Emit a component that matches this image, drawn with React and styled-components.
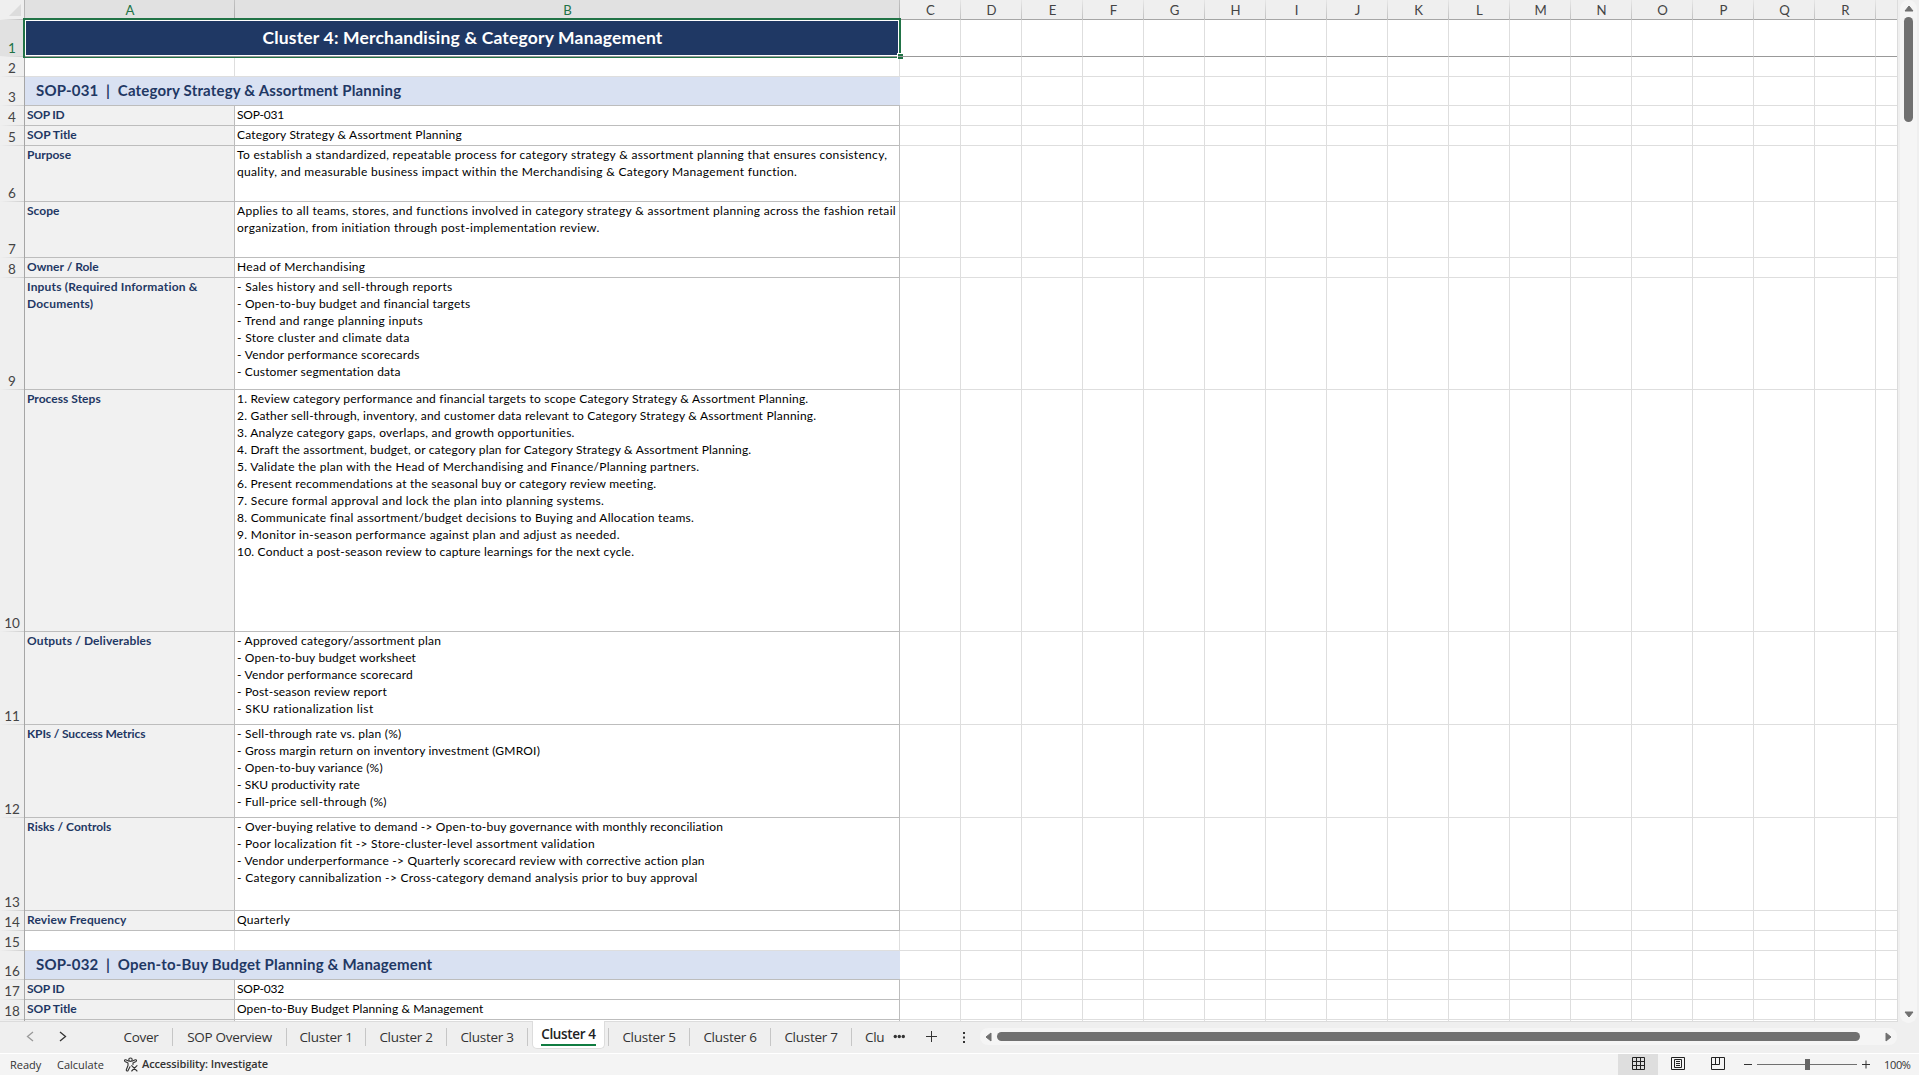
import React from 'react';
import styled, {createGlobalStyle} from "styled-components";

const GlobalStyle = createGlobalStyle`
  * { box-sizing: border-box; }
  body {
    margin: 0;
    overflow: hidden;
    background: #efefef;
  }
  svg {
    display: block;
    flex: none;
  }
`
const Window = styled.div`
  width: 1919px;
  height: 1075px;
  display: flex;
  flex-direction: column;
  background: #efefef;
  color: #000;
  font-family: Lato, "Liberation Sans", sans-serif;
`
const Workspace = styled.div`
  display: flex;
  height: 1022px;
`
const Sheet = styled.div`
  width: 1898px;
  height: 1022px;
  overflow: hidden;
  display: flex;
  flex-direction: column;
  border-right: 1px solid #dcdcdc;
  border-bottom: 1px solid #dcdcdc;
  background: #fff;
`
const HeaderRow = styled.div`
  flex: none;
  display: flex;
  height: 20px;
  background: #efefef;
`
const Corner = styled.div`
  flex: none;
  width: 25px;
  display: flex;
  justify-content: flex-end;
  padding: 4px 3px 0 0;
  border-right: 1px solid #b5b5b5;
  background: linear-gradient(90deg, #efefef, #bdbdbd) left bottom / 100% 1px no-repeat;
`
const ColumnHead = styled.div`
  flex: none;
  width: ${props=>props.$width}px;
  height: 20px;
  padding: 2px 0 0 1px;
  line-height: 17px;
  font-size: 13.2px;
  text-align: center;
  color: ${props=>props.$selected ? '#217346' : '#444'};
  background: ${props=>props.$selected ? '#e1e1e1' : '#efefef'};
  border-right: 1px solid;
  border-image: linear-gradient(${props=>props.$selected ? '#c4c4c4, #a8a8a8' : '#e9e9e9, #bdbdbd'}) 1;
  border-image-width: 0 1px 0 0;
  box-shadow: inset 0 -1px 0 #a6a6a6;
`
const Row = styled.div`
  flex: none;
  display: flex;
  height: ${props=>props.$height}px;
`
const RowHead = styled.div`
  flex: none;
  width: 25px;
  display: flex;
  align-items: flex-end;
  justify-content: center;
  line-height: 18px;
  font-size: 13.5px;
  color: ${props=>props.$selected ? '#217346' : '#444'};
  background: linear-gradient(90deg, #efefef, #cfcfcf) left bottom / 100% 1px no-repeat ${props=>props.$selected ? '#e1e1e1' : '#efefef'};
  border-right: 1px solid #a6a6a6;
`
const Cell = styled.div`
  flex: none;
  width: ${props=>props.$width}px;
  border-right: 1px solid ${props=>props.$line || '#dedede'};
  border-bottom: 1px solid ${props=>props.$bottom || props.$line || '#dedede'};
`
const LabelCell = styled(Cell)`
  padding-left: 2px;
  background: #f1f1f1;
  color: #1f3864;
  font-size: 12px;
  font-weight: 700;
  line-height: 17px;
  letter-spacing: ${props=>props.$spacing || 0}px;
  white-space: pre;
`
const ValueCell = styled(Cell)`
  padding-left: 2px;
  font-size: 12px;
  line-height: 17px;
  white-space: pre;
`
const Line = styled.div`
  height: 17px;
  letter-spacing: ${props=>props.$spacing}px;
`
const BandCell = styled.div`
  flex: none;
  width: 875px;
  padding-left: 11px;
  line-height: 27px;
  background: #d9e1f2;
  border-bottom: 1px solid #bdbdbd;
  color: #1f3864;
  font-size: 15px;
  font-weight: 700;
  letter-spacing: 0.18px;
  white-space: pre;
`
const TitleCell = styled.div`
  position: relative;
  flex: none;
  width: 875px;
  background: #1f3864;
  border-bottom: 1px solid #999;
  color: #fff;
  font-size: 17.5px;
  font-weight: 700;
  line-height: 36px;
  letter-spacing: 0.18px;
  text-align: center;
`
/* green outline that lies over the merged title cell */
const Selection = styled.div`
  position: absolute;
  top: -2px;
  left: -2px;
  width: 878px;
  height: 40px;
  border: 2px solid #217346;
  border-bottom-width: 1px;
  &:before{
    content: "";
    position: absolute;
    inset: 0 0 1px 0;
    border: 1px solid #fff;
  }
  &:after{
    content: "";
    position: absolute;
    bottom: 0;
    left: 0;
    right: 0;
    height: 1px;
    background: #999;
  }
`
const FillHandle = styled.div`
  position: absolute;
  right: -4px;
  bottom: -2px;
  width: 6px;
  height: 6px;
  z-index: 1;
  background: linear-gradient(#217346 2px, #999 2px, #999 3px, #217346 3px);
  border: solid #fff;
  border-width: 1px 0 0 1px;
`
const VerticalBar = styled.div`
  width: 17px;
  height: 1023px;
  margin-left: 2px;
  border-radius: 9px;
  background: #f5f5f5;
  display: flex;
  flex-direction: column;
  align-items: center;
  padding-top: 5px;
`
const VerticalThumb = styled.div`
  flex: none;
  width: 9px;
  height: 105px;
  margin: 5px 0 889px;
  border-radius: 5px;
  background: #707070;
`
const TabBar = styled.div`
  display: flex;
  align-items: center;
  height: 32px;
  padding-bottom: 2px;
  border-bottom: 1px solid #fff;
  color: #333;
  font-family: "Open Sans", "Noto Sans", sans-serif;
  font-size: 13.5px;
`
const Arrows = styled.div`
  flex: none;
  width: 105px;
  padding: 0 0 1px 26px;
  display: flex;
  gap: 22px;
`
const Tab = styled.div`
  flex: none;
  width: ${props=>props.$width}px;
  height: 18px;
  padding-left: ${props=>props.$indent || 0}px;
  line-height: 18px;
  text-align: center;
  letter-spacing: -0.28px;
  white-space: nowrap;
  border-right: 1px solid #c6c6c6;
`
const ActiveTab = styled.div`
  flex: none;
  align-self: flex-start;
  display: flex;
  justify-content: center;
  width: 73px;
  height: 28px;
  margin: -1px 3px 0 4px;
  border: 1px solid #dcdcdc;
  border-top: none;
  border-radius: 0 0 5px 5px;
  background: #fff;
  font-weight: 600;
  letter-spacing: -0.35px;
  color: #222;
  white-space: nowrap;
  span{
    height: 25px;
    line-height: 26px;
    border-bottom: 2px solid #107c41;
  }
`
const CutTab = styled.div`
  flex: none;
  width: 21px;
  margin-left: 13px;
  line-height: 18px;
  letter-spacing: -0.3px;
`
const HorizontalBar = styled.div`
  flex: none;
  display: flex;
  align-items: center;
  width: 917px;
  height: 17px;
  margin-left: 4px;
  padding-left: 5px;
  border-radius: 8px;
  background: #f5f5f5;
`
const HorizontalThumb = styled.div`
  flex: none;
  width: 863px;
  height: 9px;
  margin: 0 25px 0 5px;
  border-radius: 5px;
  background: #707070;
`
const StatusBar = styled.div`
  display: flex;
  align-items: center;
  height: 21px;
  padding-left: 10px;
  background: #f4f4f4;
  color: #333;
  font-family: "Open Sans", "Noto Sans", sans-serif;
  font-size: 11px;
  line-height: 21px;
  white-space: nowrap;
`
const StatusText = styled.div`
  flex: none;
  width: ${props=>props.$width}px;
`
const AccessibilityText = styled.div`
  margin-left: 3px;
  padding-bottom: 2px;
  font-weight: 600;
  letter-spacing: -0.12px;
`
const StatusRight = styled.div`
  display: flex;
  align-items: center;
  margin-left: auto;
  height: 21px;
`
const ViewButton = styled.div`
  width: 40px;
  height: 21px;
  display: flex;
  justify-content: center;
  padding: 3px 0 0 0;
  background: ${props=>props.$active ? '#dedede' : 'none'};
`
const ZoomLevel = styled.div`
  width: 49px;
  padding: 0 0 1px 14px;
  letter-spacing: -0.35px;
`

const LINE = '#bdbdbd';
const FREEZE = '#999';
const letters = 'CDEFGHIJKLMNOPQR'.split('');

// every line of a value is [text, letter spacing]
const rows = [
    {n: 2, h: 20},
    {n: 3, h: 29, band: 'SOP-031  |  Category Strategy & Assortment Planning'},
    {n: 4, h: 20, label: 'SOP ID', ls: -0.25, value: [['SOP-031', -0.2]]},
    {n: 5, h: 20, label: 'SOP Title', ls: -0.03, value: [['Category Strategy & Assortment Planning', 0.18]]},
    {n: 6, h: 56, label: 'Purpose', value: [
        ['To establish a standardized, repeatable process for category strategy & assortment planning that ensures consistency,', 0.315],
        ['quality, and measurable business impact within the Merchandising & Category Management function.', 0.305],
    ]},
    {n: 7, h: 56, label: 'Scope', value: [
        ['Applies to all teams, stores, and functions involved in category strategy & assortment planning across the fashion retail', 0.32],
        ['organization, from initiation through post-implementation review.', 0.3],
    ]},
    {n: 8, h: 20, label: 'Owner / Role', value: [['Head of Merchandising', 0.31]]},
    {n: 9, h: 112, label: 'Inputs (Required Information &\nDocuments)', ls: 0.19, value: [
        ['- Sales history and sell-through reports', 0.31],
        ['- Open-to-buy budget and financial targets', 0.2],
        ['- Trend and range planning inputs', 0.33],
        ['- Store cluster and climate data', 0.31],
        ['- Vendor performance scorecards', 0.28],
        ['- Customer segmentation data', 0.16],
    ]},
    {n: 10, h: 242, label: 'Process Steps', ls: 0.03, value: [
        ['1. Review category performance and financial targets to scope Category Strategy & Assortment Planning.', 0.21],
        ['2. Gather sell-through, inventory, and customer data relevant to Category Strategy & Assortment Planning.', 0.21],
        ['3. Analyze category gaps, overlaps, and growth opportunities.', 0.26],
        ['4. Draft the assortment, budget, or category plan for Category Strategy & Assortment Planning.', 0.175],
        ['5. Validate the plan with the Head of Merchandising and Finance/Planning partners.', 0.29],
        ['6. Present recommendations at the seasonal buy or category review meeting.', 0.22],
        ['7. Secure formal approval and lock the plan into planning systems.', 0.325],
        ['8. Communicate final assortment/budget decisions to Buying and Allocation teams.', 0.26],
        ['9. Monitor in-season performance against plan and adjust as needed.', 0.325],
        ['10. Conduct a post-season review to capture learnings for the next cycle.', 0.195],
    ]},
    {n: 11, h: 93, label: 'Outputs / Deliverables', ls: 0.13, value: [
        ['- Approved category/assortment plan', 0.23],
        ['- Open-to-buy budget worksheet', 0.16],
        ['- Vendor performance scorecard', 0.24],
        ['- Post-season review report', 0.18],
        ['- SKU rationalization list', 0.38],
    ]},
    {n: 12, h: 93, label: 'KPIs / Success Metrics', ls: -0.11, value: [
        ['- Sell-through rate vs. plan (%)', 0.23],
        ['- Gross margin return on inventory investment (GMROI)', 0.2],
        ['- Open-to-buy variance (%)', 0.15],
        ['- SKU productivity rate', 0.08],
        ['- Full-price sell-through (%)', 0.27],
    ]},
    {n: 13, h: 93, label: 'Risks / Controls', value: [
        ['- Over-buying relative to demand -> Open-to-buy governance with monthly reconciliation', 0.18],
        ['- Poor localization fit -> Store-cluster-level assortment validation', 0.29],
        ['- Vendor underperformance -> Quarterly scorecard review with corrective action plan', 0.24],
        ['- Category cannibalization -> Cross-category demand analysis prior to buy approval', 0.31],
    ]},
    {n: 14, h: 20, label: 'Review Frequency', ls: 0.13, value: [['Quarterly', 0.3]]},
    {n: 15, h: 20},
    {n: 16, h: 29, band: 'SOP-032  |  Open-to-Buy Budget Planning & Management'},
    {n: 17, h: 20, label: 'SOP ID', ls: -0.25, value: [['SOP-032', -0.2]]},
    {n: 18, h: 20, label: 'SOP Title', ls: -0.03, value: [['Open-to-Buy Budget Planning & Management', 0.1]]},
    {n: '', h: 20, label: '', value: []},
];

const EmptyCells = ({bottom}) => (
    <>
        {letters.map(l => <Cell key={l} $width={61} $bottom={bottom}/>)}
        <Cell $width={22} $bottom={bottom}/>
    </>
);

const SheetRow = ({row}) => (
    <Row $height={row.h}>
        <RowHead>{row.n}</RowHead>
        {row.band && <BandCell>{row.band}</BandCell>}
        {row.value && <LabelCell $width={210} $line={LINE} $spacing={row.ls}>{row.label}</LabelCell>}
        {row.value && <ValueCell $width={665} $line={LINE}>
            {row.value.map(([text, spacing]) => <Line key={text} $spacing={spacing}>{text}</Line>)}
        </ValueCell>}
        {!row.band && !row.value && <>
            <Cell $width={210}/>
            <Cell $width={665}/>
        </>}
        <EmptyCells/>
    </Row>
);

const Triangle = ({d, w, h}) => (
    <svg width={w} height={h} viewBox={`0 0 ${w} ${h}`}>
        <path d={d} fill="#707070" stroke="#707070" strokeLinejoin="round"/>
    </svg>
);

const Chevron = ({d, color}) => (
    <svg width="11" height="12" viewBox="0 0 11 12"><path d={d} fill="none" stroke={color} strokeWidth="1.3"/></svg>
);

const AccessibilityIcon = () => (
    <svg width="16" height="16" viewBox="0 0 16 16" fill="none" stroke="#333" strokeWidth="1.1" strokeLinecap="round" strokeLinejoin="round">
        <circle cx="7.500" cy="2.700" r="1.700"/>
        <path d="M5.500 4L2.700 2.800C1.500 2.400 1 4 2 4.500L5 5.900V8.500L3.300 12.700C3 14 4.600 14.500 5.100 13.400L7 9.700"/>
        <path d="M9.500 4L12.300 2.800C13.500 2.400 14 4 13 4.500L10 5.900V7.500"/>
        <path d="M8.700 8.700L14 14M14 8.700L8.700 14"/>
    </svg>
);

const ViewIcon = ({w, d}) => (
    <svg width={w} height="13" viewBox={`0 0 ${w} 13`}>
        <path d={d} fill="none" stroke="#222"/>
    </svg>
);

const ZoomSlider = () => (
    <svg width="132" height="21" viewBox="0 0 132 21">
        <path d="M6 10.500H14M124 10.500H132M128 6.500V14.500" stroke="#333" fill="none"/>
        <path d="M19 10.500H119" stroke="#707070"/>
        <path d="M67 5H72V16H67Z" fill="#666"/>
    </svg>
);

const App = () => {
    return (
        <Window>
            <GlobalStyle/>
            <Workspace>
                <Sheet>
                    <HeaderRow>
                        <Corner>
                            <svg width="12" height="12"><path d="M12 0V12H0Z" fill="#dcdcdc"/></svg>
                        </Corner>
                        <ColumnHead $width={210} $selected>A</ColumnHead>
                        <ColumnHead $width={665} $selected>B</ColumnHead>
                        {letters.map(l => <ColumnHead key={l} $width={61}>{l}</ColumnHead>)}
                        <ColumnHead $width={22}/>
                    </HeaderRow>
                    <Row $height={37}>
                        <RowHead $selected>1</RowHead>
                        <TitleCell>
                            Cluster 4: Merchandising &amp; Category Management
                            <Selection><FillHandle/></Selection>
                        </TitleCell>
                        <EmptyCells bottom={FREEZE}/>
                    </Row>
                    {rows.map((row, i) => <SheetRow key={i} row={row}/>)}
                </Sheet>
                <VerticalBar>
                    <Triangle w={10} h={7} d="M5 1L9 6H1Z"/>
                    <VerticalThumb/>
                    <Triangle w={10} h={7} d="M1 1H9L5 6Z"/>
                </VerticalBar>
            </Workspace>
            <TabBar>
                <Arrows>
                    <Chevron d="M7 2L1.500 6.500L7 11" color="#999"/>
                    <Chevron d="M1 2L6.500 6.500L1 11" color="#333"/>
                </Arrows>
                <Tab $width={68} $indent={5}>Cover</Tab>
                <Tab $width={114}>SOP Overview</Tab>
                <Tab $width={79}>Cluster 1</Tab>
                <Tab $width={81}>Cluster 2</Tab>
                <Tab $width={81}>Cluster 3</Tab>
                <ActiveTab><span>Cluster 4</span></ActiveTab>
                <Tab $width={1}/>
                <Tab $width={81}>Cluster 5</Tab>
                <Tab $width={81}>Cluster 6</Tab>
                <Tab $width={81}>Cluster 7</Tab>
                <CutTab>Clu</CutTab>
                <svg width="90" height="20" viewBox="0 0 90 20" fill="#333">
                    <circle cx="9.300" cy="9.500" r="1.700"/><circle cx="13.300" cy="9.500" r="1.700"/><circle cx="17.300" cy="9.500" r="1.700"/>
                    <path d="M40 9H51V10H40ZM45 4H46V15H45Z"/>
                    <path d="M77 5H79V7H77ZM77 9.500H79V11.500H77ZM77 14H79V16H77Z"/>
                </svg>
                <HorizontalBar>
                    <Triangle w={7} h={10} d="M6 1V9L1 5Z"/>
                    <HorizontalThumb/>
                    <Triangle w={7} h={10} d="M1 1V9L6 5Z"/>
                </HorizontalBar>
            </TabBar>
            <StatusBar>
                <StatusText $width={47}>Ready</StatusText>
                <StatusText $width={66}>Calculate</StatusText>
                <AccessibilityIcon/>
                <AccessibilityText>Accessibility: Investigate</AccessibilityText>
                <StatusRight>
                    <ViewButton $active>
                        <ViewIcon w={13} d="M.5 .5H12.500V12.500H.5ZM.5 4.500H12.500M.5 8.500H12.500M4.500 .5V12.500M8.500 .5V12.500"/>
                    </ViewButton>
                    <ViewButton>
                        <ViewIcon w={14} d="M.5 .5H13.500V12.500H.5ZM3.500 2.500H10.500V10.500H3.500ZM5 4.500H9M5 6.500H9M5 8.500H9"/>
                    </ViewButton>
                    <ViewButton>
                        <ViewIcon w={14} d="M.5 .5H13.500V12.500H.5ZM.5 7.500H8.500V.5M4.500 .5V7.500"/>
                    </ViewButton>
                    <ZoomSlider/>
                    <ZoomLevel>100%</ZoomLevel>
                </StatusRight>
            </StatusBar>
        </Window>
    );
}

export default App;
